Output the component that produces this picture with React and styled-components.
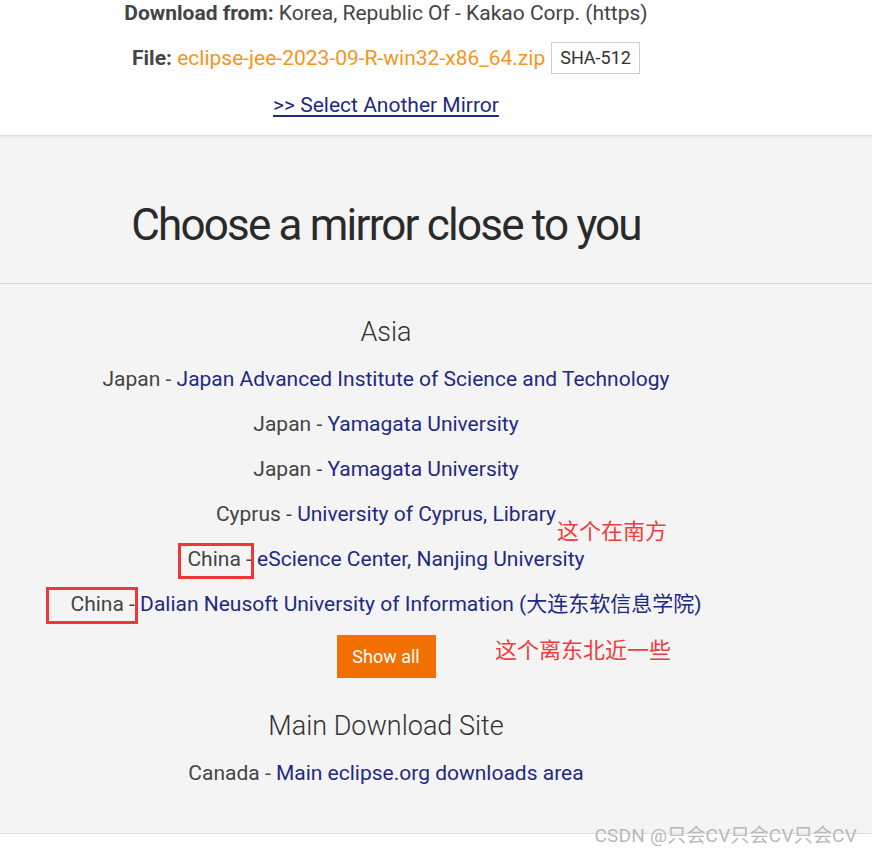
import React from 'react';
import styled, { createGlobalStyle } from 'styled-components';

const GlobalStyle = createGlobalStyle`
  html, body {
    margin: 0;
    padding: 0;
    background: #ffffff;
    font-family: Roboto, "Liberation Sans", "Noto Sans CJK SC", sans-serif;
    color: #444;
  }
`;

const Page = styled.div`
  position: relative;
  width: 872px;
  min-height: 855px;
  overflow: hidden;
`;

const Column = styled.div`
  width: 772px;
  display: flex;
  flex-direction: column;
  align-items: center;
  text-align: center;
`;

const TopSection = styled.div`
  background: #fff;
  padding-bottom: 17px;
  border-bottom: 1px solid #e2e2e2;
  box-shadow: 0 1px 2px rgba(0, 0, 0, 0.06);
  position: relative;
  z-index: 1;
`;

const InfoLine = styled.div`
  font-size: 21px;
  line-height: 26px;
  color: #444;
  display: flex;
  align-items: center;
  gap: 6px;
  margin-top: ${(p) => p.$top || 0}px;
  b {
    font-weight: 700;
  }
`;

const FileLink = styled.a`
  color: #f7941e;
  text-decoration: none;
`;

const HashBox = styled.span`
  display: inline-block;
  border: 1px solid #cfcfcf;
  padding: 0 8px;
  height: 30px;
  line-height: 30px;
  font-size: 18px;
  color: #333;
  background: #fff;
`;

const AnotherMirror = styled.a`
  color: #1e2a82;
  font-size: 21px;
  line-height: 26px;
  text-decoration: underline;
  text-underline-offset: 3px;
  margin-top: 18px;
`;

const GraySection = styled.div`
  background: #f4f4f4;
  border-bottom: 1px solid #dedede;
`;

const HeadlineBlock = styled.div`
  padding: 65px 0 34px;
  border-bottom: 1px solid #d6d6d6;
`;

const Headline = styled.h1`
  margin: 0;
  font-size: 44px;
  line-height: 48px;
  font-weight: 400;
  letter-spacing: -1.8px;
  color: #2a2a2a;
`;

const Mirrors = styled.div`
  padding: 32px 0 37px;
`;

const RegionTitle = styled.h2`
  margin: ${(p) => p.$top || 0}px 0 9px;
  font-size: 27px;
  line-height: 32px;
  font-weight: 300;
  color: #333;
`;

const MirrorRow = styled.div`
  font-size: 21px;
  line-height: 45px;
  height: 45px;
  color: #444;
  white-space: nowrap;
`;

const Country = styled.span`
  position: relative;
`;

const MirrorLink = styled.a`
  color: #1e2a82;
  text-decoration: none;
`;

const ShowAll = styled.button`
  margin-top: 8px;
  width: 99px;
  height: 43px;
  border: none;
  background: #f27000;
  color: #fff;
  font-family: Roboto, "Liberation Sans", sans-serif;
  font-size: 18px;
  cursor: pointer;
`;

const MarkBox = styled.span`
  position: absolute;
  left: ${(p) => p.$left}px;
  top: calc(50% + ${(p) => p.$top}px);
  width: ${(p) => p.$w}px;
  height: ${(p) => p.$h}px;
  border: 3px solid #ef3737;
  box-sizing: border-box;
  pointer-events: none;
`;

const Note = styled.span`
  position: absolute;
  left: ${(p) => p.$left}px;
  top: ${(p) => p.$top}px;
  font-family: "Noto Sans CJK SC", sans-serif;
  font-size: 22px;
  line-height: 26px;
  color: #f23c3c;
  white-space: nowrap;
`;

const Watermark = styled.div`
  position: absolute;
  right: 15px;
  top: 824px;
  font-family: Roboto, "Noto Sans CJK SC", sans-serif;
  font-size: 19px;
  line-height: 24px;
  color: #b9b9b9;
  letter-spacing: 0.2px;
`;

const asia = [
  { country: 'Japan', name: 'Japan Advanced Institute of Science and Technology' },
  { country: 'Japan', name: 'Yamagata University' },
  { country: 'Japan', name: 'Yamagata University' },
  { country: 'Cyprus', name: 'University of Cyprus, Library' },
  { country: 'China', name: 'eScience Center, Nanjing University', mark: { left: -9, top: -16, w: 76, h: 36 } },
  { country: 'China', name: 'Dalian Neusoft University of Information (大连东软信息学院)', mark: { left: -25, top: -17, w: 92, h: 37 } },
];

export default function App() {
  return (
    <Page>
      <GlobalStyle />
      <TopSection>
        <Column>
          <InfoLine>
            <span><b>Download from:</b> Korea, Republic Of - Kakao Corp. (https)</span>
          </InfoLine>
          <InfoLine $top={16}>
            <span><b>File:</b> <FileLink href="#">eclipse-jee-2023-09-R-win32-x86_64.zip</FileLink></span>
            <HashBox>SHA-512</HashBox>
          </InfoLine>
          <AnotherMirror href="#">&gt;&gt; Select Another Mirror</AnotherMirror>
        </Column>
      </TopSection>

      <GraySection>
        <HeadlineBlock>
          <Column>
            <Headline>Choose a mirror close to you</Headline>
          </Column>
        </HeadlineBlock>
        <Mirrors>
          <Column>
            <RegionTitle>Asia</RegionTitle>
            {asia.map((m, i) => (
              <MirrorRow key={i}>
                <Country>
                  {m.country} -
                  {m.mark && <MarkBox $left={m.mark.left} $top={m.mark.top} $w={m.mark.w} $h={m.mark.h} />}
                </Country>{' '}
                <MirrorLink href="#">{m.name}</MirrorLink>
              </MirrorRow>
            ))}
            <ShowAll>Show all</ShowAll>
            <RegionTitle $top={32}>Main Download Site</RegionTitle>
            <MirrorRow>
              <Country>Canada -</Country> <MirrorLink href="#">Main eclipse.org downloads area</MirrorLink>
            </MirrorRow>
          </Column>
        </Mirrors>
      </GraySection>

      <Note $left={557} $top={516}>这个在南方</Note>
      <Note $left={495} $top={635}>这个离东北近一些</Note>
      <Watermark>CSDN @只会CV只会CV只会CV</Watermark>
    </Page>
  );
}
